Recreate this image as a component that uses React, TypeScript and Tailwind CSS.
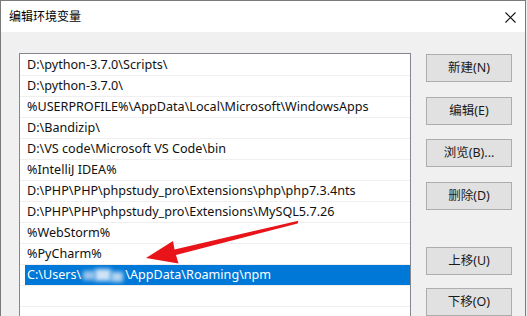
import React from "react";

const rows = [
  "D:\\python-3.7.0\\Scripts\\",
  "D:\\python-3.7.0\\",
  "%USERPROFILE%\\AppData\\Local\\Microsoft\\WindowsApps",
  "D:\\Bandizip\\",
  "D:\\VS code\\Microsoft VS Code\\bin",
  "%IntelliJ IDEA%",
  "D:\\PHP\\PHP\\phpstudy_pro\\Extensions\\php\\php7.3.4nts",
  "D:\\PHP\\PHP\\phpstudy_pro\\Extensions\\MySQL5.7.26",
  "%WebStorm%",
  "%PyCharm%",
];

const font = { fontFamily: '"Noto Sans", "Noto Sans CJK SC", sans-serif' };

function Btn({ label, mt }: { label: string; mt: string }) {
  return (
    <div
      className={`${mt} w-[86px] h-[28px] bg-[#e1e1e1] border border-[#adadad] flex items-center justify-center text-[12.5px] text-[#1a1a1a]`}
    >
      {label}
    </div>
  );
}

export default function App() {
  return (
    <div className="w-[527px] h-[316px] bg-[#f0f0f0] relative overflow-hidden" style={font}>
      <div className="w-[526px] h-[316px] border-l border-t border-r border-[#7a7a7a] flex flex-col">
        <div className="h-[31px] bg-white flex items-center justify-between pl-[8px] pr-[9px] shrink-0">
          <span className="text-[12px] text-black leading-none">编辑环境变量</span>
          <svg width="11" height="11" viewBox="0 0 11 11" className="mt-[1px]">
            <path d="M0.5 0.5 L10.5 10.5 M10.5 0.5 L0.5 10.5" stroke="#111" strokeWidth="1.1" />
          </svg>
        </div>
        <div className="flex-1 bg-[#f0f0f0] flex items-start pl-[18px]">
          <div className="mt-[21px] w-[392px] h-[300px] bg-white border border-[#828790] pt-[1px] text-[12.6px] text-[#111]">
            {rows.map((r) => (
              <div key={r} className="h-[21px] border-b border-[#efefef] pl-[5px]">
                <div className="h-full pl-[2px] flex items-center whitespace-nowrap">{r}</div>
              </div>
            ))}
            <div className="h-[21px] border-b border-[#efefef] pl-[5px]">
              <div className="h-full pl-[2px] flex items-center whitespace-nowrap bg-[#0078d7] text-white">
                C:\Users\
                <span className="relative inline-block w-[44px] h-[14px]">
                  <span className="absolute left-[2px] top-[3px] w-[12px] h-[9px] bg-[#9cc6ec] blur-[2px]" />
                  <span className="absolute left-[14px] top-[1px] w-[16px] h-[12px] bg-[#cfe3f6] blur-[2px]" />
                  <span className="absolute left-[30px] top-[4px] w-[12px] h-[10px] bg-[#b6d5f1] blur-[2px]" />
                </span>
                \AppData\Roaming\npm
              </div>
            </div>
            <div className="h-[21px] border-b border-[#efefef]" />
          </div>
          <div className="ml-[15px] flex flex-col">
            <Btn label="新建(N)" mt="mt-[22px]" />
            <Btn label="编辑(E)" mt="mt-[15px]" />
            <Btn label="浏览(B)..." mt="mt-[14px]" />
            <Btn label="删除(D)" mt="mt-[15px]" />
            <Btn label="上移(U)" mt="mt-[37px]" />
            <Btn label="下移(O)" mt="mt-[13px]" />
          </div>
        </div>
      </div>
      <svg className="absolute left-0 top-0 pointer-events-none" width="527" height="316" viewBox="0 0 527 316">
        <polygon
          points="298.4,220.8 297.6,223.4 176,255 178.5,263.5 146,258 173,241 174.5,249.5"
          fill="#e8141a"
        />
      </svg>
    </div>
  );
}
